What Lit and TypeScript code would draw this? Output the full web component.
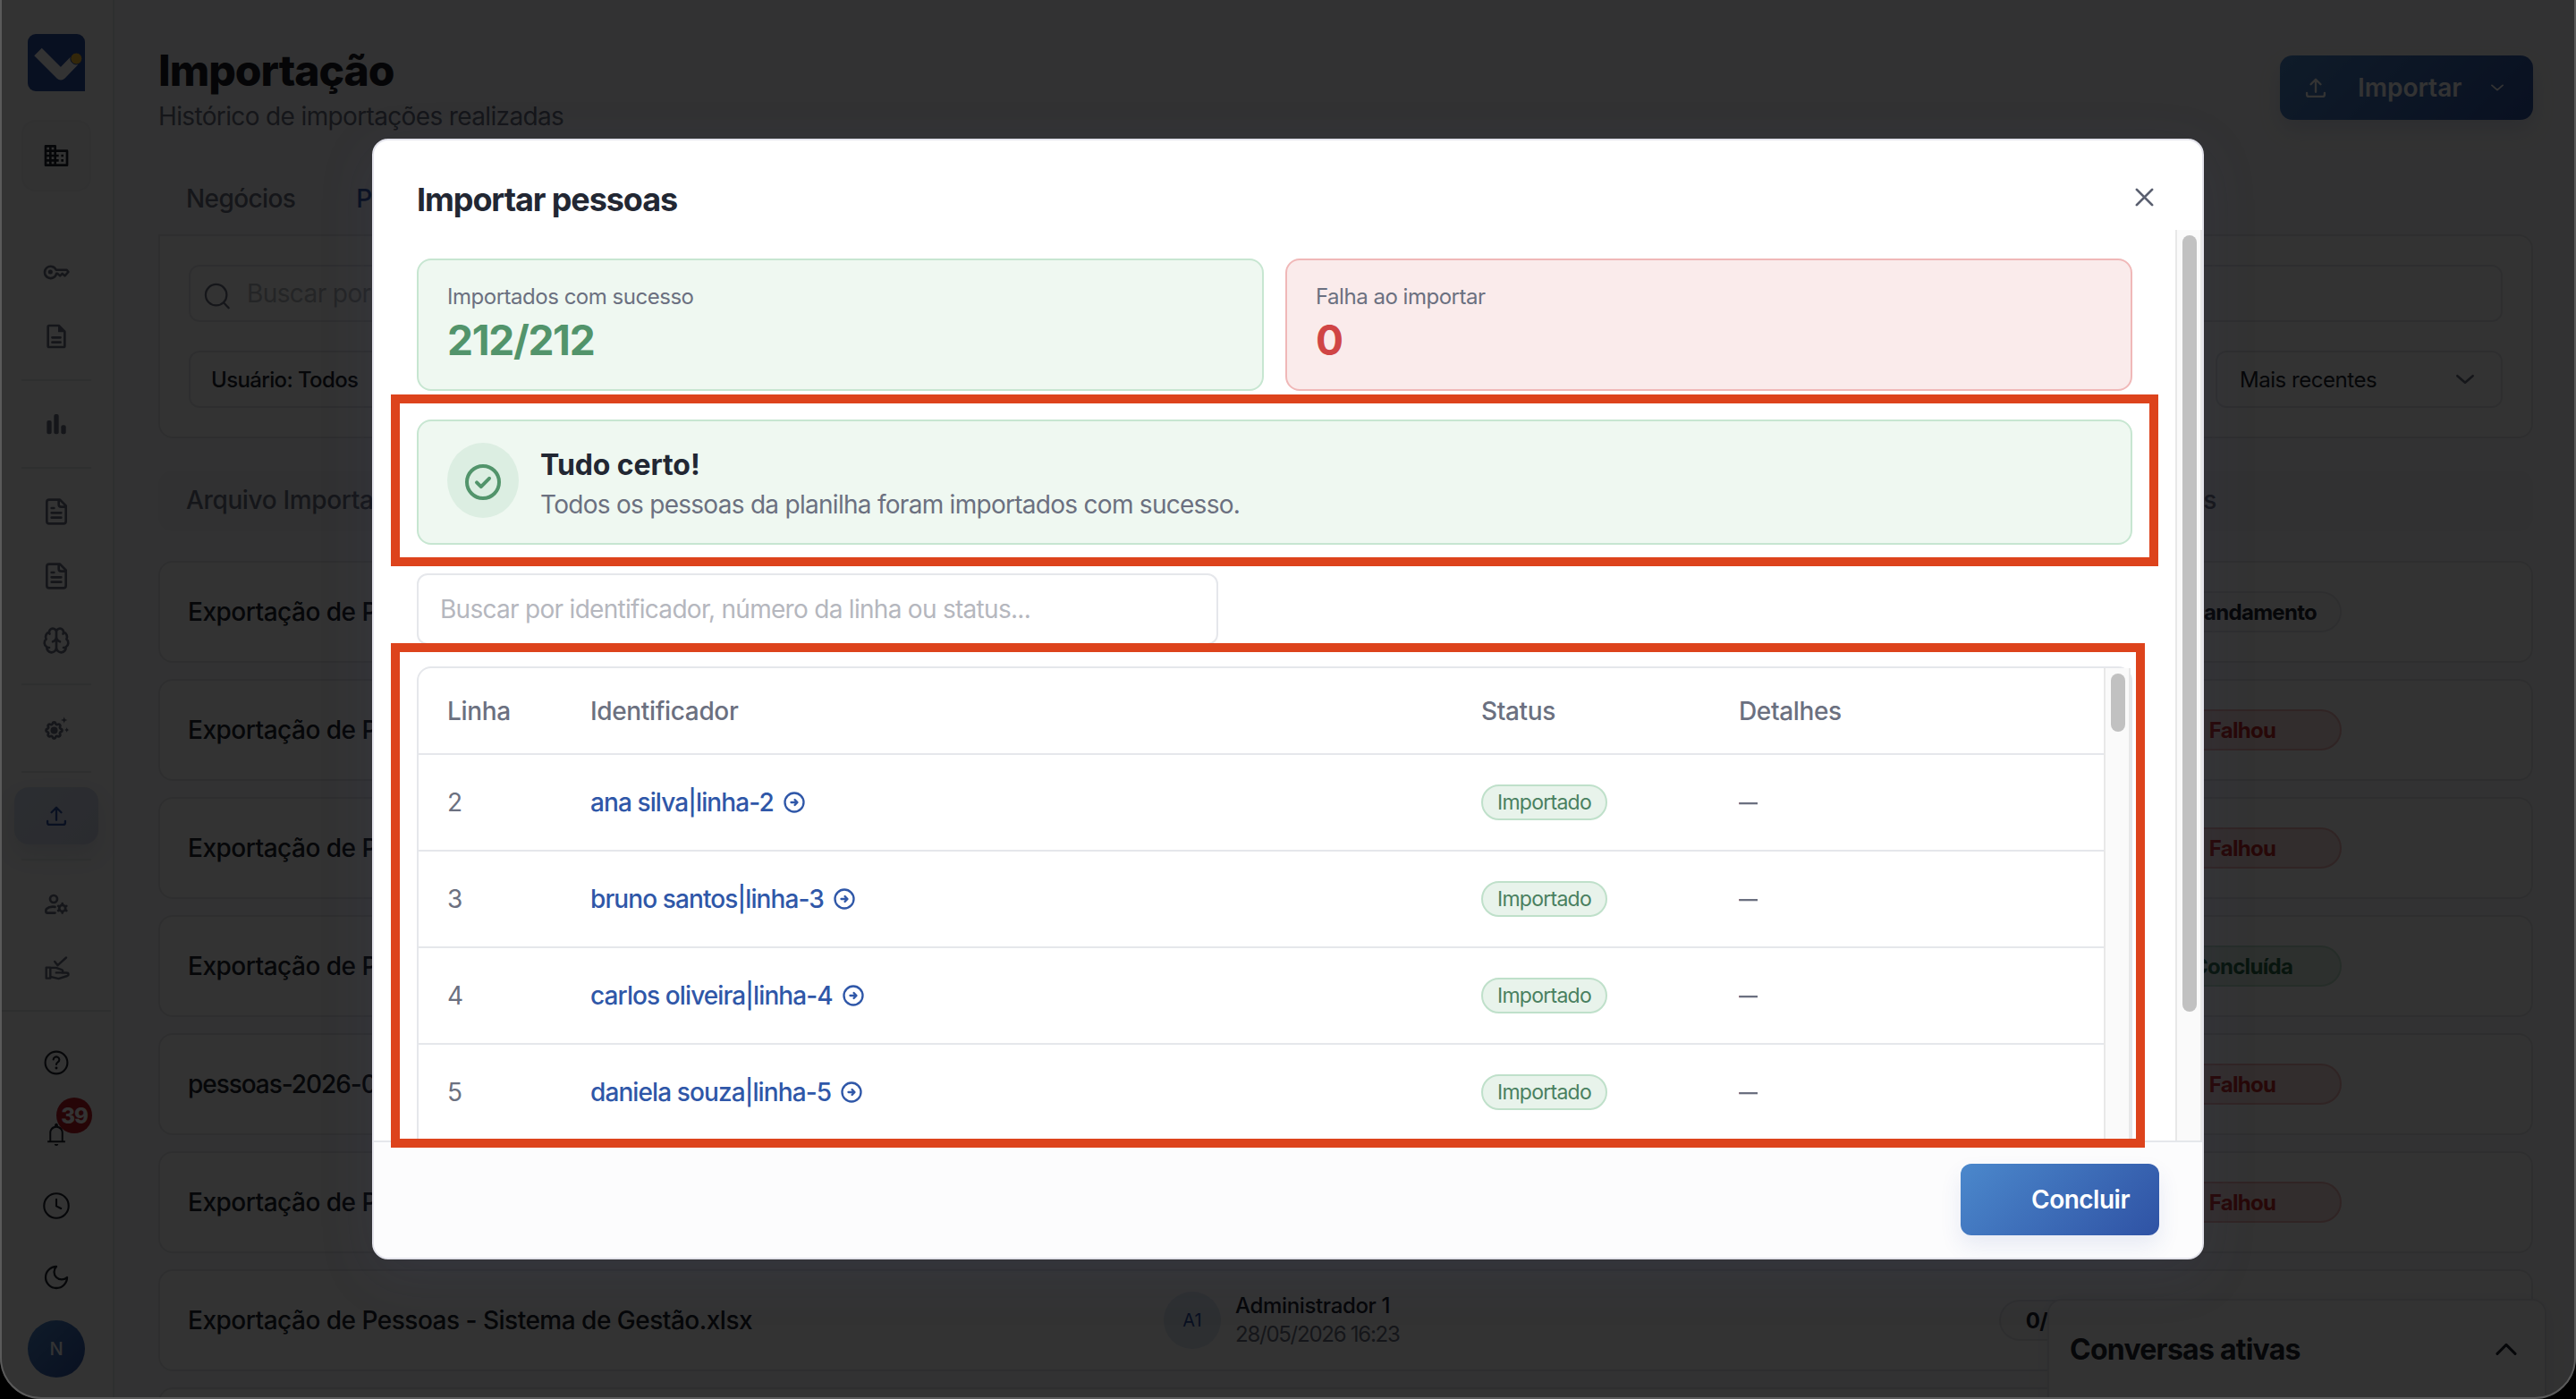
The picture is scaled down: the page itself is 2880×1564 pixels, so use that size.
import { LitElement, html, svg, css, type TemplateResult } from "lit";
import { customElement, property } from "lit/decorators.js";
import { classMap } from "lit/directives/class-map.js";

const GEAR =
  "M10.325 4.317c.426-1.756 2.924-1.756 3.35 0a1.724 1.724 0 0 0 2.573 1.066c1.543-.94 3.31.826 2.37 2.37a1.724 1.724 0 0 0 1.065 2.572c1.756.426 1.756 2.924 0 3.35a1.724 1.724 0 0 0-1.066 2.573c.94 1.543-.826 3.31-2.37 2.37a1.724 1.724 0 0 0-2.572 1.065c-.426 1.756-2.924 1.756-3.35 0a1.724 1.724 0 0 0-2.573-1.066c-1.543.94-3.31-.826-2.37-2.37a1.724 1.724 0 0 0-1.065-2.572c-1.756-.426-1.756-2.924 0-3.35a1.724 1.724 0 0 0 1.066-2.573c-.94-1.543.826-3.31 2.37-2.37c1 .608 2.296.07 2.572-1.065z";

interface Glyph {
  box: number;
  weight: number;
  art: TemplateResult;
}

const GLYPHS: Record<string, Glyph> = {
  building: {
    box: 24,
    weight: 0,
    art: svg`<path fill="currentColor" d="M12 7V4a1 1 0 0 0-1-1H3a1 1 0 0 0-1 1v16a1 1 0 0 0 1 1h18a1 1 0 0 0 1-1V8a1 1 0 0 0-1-1H12zM6 19H4v-2h2v2zm0-4H4v-2h2v2zm0-4H4V9h2v2zm0-4H4V5h2v2zm4 12H8v-2h2v2zm0-4H8v-2h2v2zm0-4H8V9h2v2zm0-4H8V5h2v2zm10 12h-8v-2h2v-2h-2v-2h2v-2h-2V9h8v10zm-2-8h-2v2h2v-2zm0 4h-2v2h2v-2z"/>`,
  },
  key: {
    box: 24,
    weight: 1.9,
    art: svg`<path d="M11.8 10.3h8.900l1.400 1.700-3 3.300-2.100-1.900-1.900 1.900-2.100-1.900h-.9a5 5 0 1 1-.3-3.100z"/><circle cx="7" cy="12" r="1.900" fill="currentColor" stroke="none"/>`,
  },
  doc: {
    box: 24,
    weight: 2,
    art: svg`<path d="M14 3H6a1 1 0 0 0-1 1v16a1 1 0 0 0 1 1h12a1 1 0 0 0 1-1V8zM8.6 17h6.8M8.6 13h6.8"/><path d="M13.5 3v5.5H19z" fill="currentColor" stroke="none"/>`,
  },
  bars: {
    box: 24,
    weight: 0,
    art: svg`<g fill="currentColor"><rect x="4" y="9" width="4" height="11.4" rx="1.500"/><rect x="10" y="3.7" width="4" height="16.7" rx="1.500"/><rect x="16" y="13" width="4" height="7.4" rx="1.500"/></g>`,
  },
  file: {
    box: 24,
    weight: 2,
    art: svg`<path d="M15 2H6a2 2 0 0 0-2 2v16a2 2 0 0 0 2 2h12a2 2 0 0 0 2-2V7zM14 2v4a2 2 0 0 0 2 2h4M10 9H8M16 13H8M16 17H8"/>`,
  },
  brain: {
    box: 24,
    weight: 2,
    art: svg`<path d="M12 5a3 3 0 1 0-5.997.125 4 4 0 0 0-2.526 5.77 4 4 0 0 0 .556 6.588A4 4 0 1 0 12 18zM12 5a3 3 0 1 1 5.997.125 4 4 0 0 1 2.526 5.77 4 4 0 0 1-.556 6.588A4 4 0 1 1 12 18zM15 13a4.5 4.5 0 0 1-3-4 4.5 4.5 0 0 1-3 4M6.003 5.125A3 3 0 0 0 6.4 6.5M17.6 6.5a3 3 0 0 0 .4-1.375M6 18a4 4 0 0 1-1.967-.516M19.967 17.484A4 4 0 0 1 18 18"/>`,
  },
  automation: {
    box: 32,
    weight: 2.8,
    art: svg`<path transform="translate(1.5 6.5)" d=${GEAR}/><circle cx="13.5" cy="18.5" r="4" fill="currentColor" stroke="none"/><path fill="currentColor" stroke="none" d="M24.7 3.2c.5 2.6 1.2 3.3 3.8 3.8-2.6.5-3.3 1.2-3.8 3.8-.5-2.6-1.2-3.3-3.8-3.8 2.6-.5 3.3-1.2 3.8-3.8zM27.7 15c.4 2 1 2.6 3 3-2 .4-2.6 1-3 3-.4-2-1-2.6-3-3 2-.4 2.6-1 3-3z"/>`,
  },
  upload: {
    box: 24,
    weight: 2,
    art: svg`<path d="M3.5 17v1.6A1.9 1.9 0 0 0 5.4 20.500h13.200a1.900 1.900 0 0 0 1.900-1.900V17M7.300 8.800 12 4.100l4.700 4.700M12 4.500V16"/>`,
  },
  userGear: {
    box: 32,
    weight: 2.7,
    art: svg`<circle cx="13" cy="11" r="4"/><path d="M14.500 19.900c-.8-.1-1.600-.2-2.500-.2-3 0-5.500.9-6.900 2.200-.6.600-.7 1.200-.7 2v1.300a1.400 1.400 0 0 0 1.400 1.400h8.700"/><circle cx="22.700" cy="21.400" r="3.500"/><path d="M22.700 17.400v-1.200M22.700 26.600v-1.200M26.200 19.400l1-.6M18.200 24l1-.6M26.200 23.400l1 .6M18.200 18.800l1 .6"/>`,
  },
  handCheck: {
    box: 32,
    weight: 2.4,
    art: svg`<path d="m14.200 9 3.300 4.200L27 4.500M4.700 15.600h4.600v12H4.700zM9.300 15.900h6.400l6.300 2.300c2 .9 1.500 3.200-.6 3.200h-5.600M22 21.500h5.200c3 0 3 2.700 1 3.500l-9.700 3.100-9.200-2.200"/>`,
  },
  help: {
    box: 24,
    weight: 1.6,
    art: svg`<circle cx="12" cy="12" r="9.300"/><path d="M9.500 9.400a2.500 2.400 0 1 1 3.800 2.100c-.9.600-1.300 1-1.300 2"/><circle cx="12" cy="16.500" r="1.100" fill="currentColor" stroke="none"/>`,
  },
  bell: {
    box: 24,
    weight: 0,
    art: svg`<path fill="currentColor" d="M4.600 19v-1.500h1.600V10.800c0-1.400.4-2.600 1.200-3.700.8-1 1.900-1.800 3.200-2.100v-.6c0-.4.1-.7.400-1a1.400 1.400 0 0 1 2 0c.3.300.4.600.4 1V5c1.300.3 2.400 1 3.200 2.100.8 1.100 1.200 2.300 1.200 3.700v6.700h1.600V19zM12 21.800a1.700 1.700 0 0 1-1.700-1.500h3.400a1.700 1.700 0 0 1-1.700 1.500zM7.700 17.500h8.600v-6.700c0-1.200-.4-2.200-1.300-3a4.200 4.200 0 0 0-6 0c-.9.800-1.300 1.800-1.300 3z"/>`,
  },
  clock: {
    box: 24,
    weight: 1.6,
    art: svg`<circle cx="12" cy="12" r="10.300"/><path d="M12 6.600v5.700l3.900 1.900"/>`,
  },
  moon: {
    box: 24,
    weight: 1.7,
    art: svg`<path d="M12 3a6 6 0 0 0 9 9 9 9 0 1 1-9-9z"/>`,
  },
  search: {
    box: 24,
    weight: 1.7,
    art: svg`<circle cx="11" cy="11" r="8.800"/><path d="m17.200 17.400 4.300 4.500"/>`,
  },
  down: { box: 24, weight: 2.4, art: svg`<path d="m4 8.500 8 7 8-7"/>` },
  up: { box: 24, weight: 2.4, art: svg`<path d="m4 15.500 8-8 8 8"/>` },
  close: { box: 24, weight: 2.9, art: svg`<path d="m3 3 18 18M21 3 3 21"/>` },
  check: {
    box: 24,
    weight: 2,
    art: svg`<circle cx="12" cy="12" r="9"/><path d="m8.500 12.200 2.400 2.400 4.600-4.700"/>`,
  },
  open: {
    box: 24,
    weight: 2,
    art: svg`<circle cx="12" cy="12" r="9"/><path d="M9 12h5.800M12.500 9.400l2.500 2.600-2.500 2.600"/>`,
  },
};

@customElement("ui-icon")
class UiIcon extends LitElement {
  @property() name = "";
  static styles = css`
    :host {
      display: block;
      flex: none;
      width: var(--icon-size, 32px);
      height: var(--icon-size, 32px);
    }
    .art {
      display: block;
      width: 100%;
      height: 100%;
      overflow: visible;
      fill: none;
      stroke-linecap: round;
      stroke-linejoin: round;
    }
  `;
  render() {
    const g = GLYPHS[this.name];
    return html`<svg
      class="art"
      viewBox="0 0 ${g.box} ${g.box}"
      stroke=${g.weight ? "currentColor" : "none"}
      stroke-width=${g.weight}
    >
      ${g.art}
    </svg>`;
  }
}

@customElement("side-nav")
class SideNav extends LitElement {
  static styles = css`
    :host {
      display: flex;
      flex-direction: column;
      align-items: center;
      width: 122px;
      padding-right: 2px;
      border-right: 2px solid #e7e8ec;
      background: #fcfcfd;
      color: #6b7080;
    }
    .logo {
      width: 64px;
      height: 64px;
      margin-top: 38px;
      border-radius: 9px 9px 0 9px;
      background: #2c50a4;
    }
    .company {
      display: grid;
      place-items: center;
      box-sizing: border-box;
      width: 78px;
      height: 80px;
      margin: 32px 0 54px;
      border: 2px solid #f2f3f5;
      border-radius: 16px;
      background: #f8f8fa;
      color: #20242e;
    }
    .slot {
      display: grid;
      place-items: center;
      flex: none;
      width: 94px;
      height: 72px;
    }
    .rule {
      flex: none;
      width: 78px;
      height: 2px;
      margin: 12px 0;
      background: #e7e8ec;
    }
    .active {
      display: grid;
      place-items: center;
      width: 94px;
      height: 64px;
      border-radius: 16px;
      background: linear-gradient(135deg, #d8e2f4, #d2d7ea);
      box-shadow: 0 12px 24px rgba(60, 80, 130, 0.12);
      color: #2f52a4;
      --icon-size: 28px;
    }
    .foot {
      display: flex;
      flex-direction: column;
      align-items: center;
      align-self: stretch;
      margin-top: 11px;
      padding-top: 17px;
      border-top: 2px solid #e7e8ec;
      color: #20242e;
    }
    .tall {
      position: relative;
      display: grid;
      place-items: center;
      width: 80px;
      height: 80px;
    }
    .badge {
      position: absolute;
      top: -1px;
      left: 40px;
      display: grid;
      place-items: center;
      width: 40px;
      height: 40px;
      border-radius: 50%;
      background: #be1a26;
      color: #fff;
      font-size: 24px;
      font-weight: 800;
      letter-spacing: -1px;
    }
    .me {
      display: grid;
      place-items: center;
      width: 64px;
      height: 64px;
      border-radius: 50%;
      background: linear-gradient(135deg, #4b88cc, #2f52a4);
      color: #fff;
      font-size: 20px;
      font-weight: 500;
    }
  `;
  private slotFor(name: string) {
    return html`<div class="slot"><ui-icon name=${name}></ui-icon></div>`;
  }
  render() {
    const rule = html`<div class="rule"></div>`;
    return html`
      <svg class="logo" viewBox="0 0 64 64">
        <path
          d="M11.500 20 37 45.500 52 30"
          fill="none"
          stroke="#fff"
          stroke-width="12"
          stroke-linejoin="round"
        />
        <circle cx="54.300" cy="27.500" r="6.500" fill="#ffc433" stroke="#2c50a4" />
      </svg>
      <div class="company"><ui-icon name="building"></ui-icon></div>
      ${this.slotFor("key")}${this.slotFor("doc")}${rule}${this.slotFor("bars")}${rule}
      ${this.slotFor("file")}${this.slotFor("file")}${this.slotFor("brain")}${rule}
      ${this.slotFor("automation")}${rule}
      <div class="slot">
        <div class="active"><ui-icon name="upload"></ui-icon></div>
      </div>
      ${rule}${this.slotFor("userGear")}${this.slotFor("handCheck")}
      <div class="foot">
        <div class="tall"><ui-icon name="help"></ui-icon></div>
        <div class="tall">
          <ui-icon name="bell"></ui-icon><span class="badge">39</span>
        </div>
        <div class="tall"><ui-icon name="clock"></ui-icon></div>
        <div class="tall"><ui-icon name="moon"></ui-icon></div>
        <div class="tall"><span class="me">N</span></div>
      </div>
    `;
  }
}

type Tone = "plain" | "bad" | "good";
const EXPORT = "Exportação de Pessoas - Sistema de Gestão.xlsx";
const HISTORY: { file: string; status: string; tone: Tone; dense?: boolean }[] = [
  { file: EXPORT, status: "Em andamento", tone: "plain" },
  { file: EXPORT, status: "Falhou", tone: "bad" },
  { file: EXPORT, status: "Falhou", tone: "bad" },
  { file: EXPORT, status: "Concluída", tone: "good" },
  { file: "pessoas-2026-05-28.xlsx", status: "Falhou", tone: "bad", dense: true },
  { file: EXPORT, status: "Falhou", tone: "bad" },
  { file: EXPORT, status: "Falhou", tone: "bad" },
];

@customElement("import-history")
class ImportHistory extends LitElement {
  static styles = css`
    :host {
      display: block;
      box-sizing: border-box;
      min-width: 0;
      padding: 51px 48px 0 49px;
      color: #20242e;
      overflow: hidden;
    }
    .head {
      display: flex;
      justify-content: space-between;
      height: 141px;
    }
    .title {
      margin: 0;
      font-size: 48px;
      line-height: 56px;
      font-weight: 800;
      letter-spacing: -1px;
      color: #1a1d26;
    }
    .sub {
      padding-top: 5px;
      font-size: 28px;
      line-height: 36px;
      letter-spacing: -0.64px;
      color: #6b7080;
    }
    .import {
      display: flex;
      align-items: center;
      box-sizing: border-box;
      width: 283px;
      height: 72px;
      margin-top: 11px;
      padding-left: 26px;
      border-radius: 14px;
      background: linear-gradient(135deg, #4b88cc, #2f52a4);
      box-shadow: 0 12px 24px rgba(47, 82, 164, 0.15);
      color: #fff;
      font-size: 28px;
      font-weight: 600;
      --icon-size: 28px;
    }
    .import .text {
      margin: 0 31px 0 33px;
    }
    .import .arrow {
      --icon-size: 18px;
    }
    .tabs {
      display: flex;
      gap: 68px;
      height: 70px;
      padding-left: 31px;
      font-size: 28px;
      line-height: 60px;
      font-weight: 500;
      letter-spacing: -0.6px;
      color: #6b7080;
    }
    .current {
      color: #2f52a4;
    }
    .filters {
      box-sizing: border-box;
      height: 228px;
      padding: 32px 32px 0;
      border: 2px solid #e5e7eb;
      border-radius: 0 16px 16px 16px;
      background: #fff;
    }
    .field {
      display: flex;
      align-items: center;
      box-sizing: border-box;
      height: 64px;
      border: 2px solid #e5e7eb;
      border-radius: 12px;
    }
    .query {
      padding: 6px 0 0 14px;
      gap: 17px;
      font-size: 28px;
      letter-spacing: -0.6px;
      color: #6b7080;
    }
    .hint {
      margin-top: -6px;
      color: #b5b7be;
    }
    .line {
      display: flex;
      justify-content: space-between;
      margin-top: 32px;
    }
    .user {
      width: 320px;
      padding-left: 23px;
      font-size: 24px;
      font-weight: 500;
      letter-spacing: -0.63px;
    }
    .sort {
      justify-content: space-between;
      width: 321px;
      padding: 0 27px 0 25px;
      font-size: 24px;
      letter-spacing: -0.46px;
      --icon-size: 26px;
    }
    .sort ui-icon {
      color: #6b7080;
    }
    .columns {
      display: grid;
      grid-template-columns: 2187px 1fr;
      align-items: center;
      box-sizing: border-box;
      height: 68px;
      margin: 36px 0 33px;
      padding: 0 0 3px 31px;
      border-radius: 16px;
      background: #f4f5f7;
      font-size: 28px;
      font-weight: 500;
      letter-spacing: -0.36px;
      color: #6b7080;
    }
    .row {
      display: grid;
      grid-template-columns: 946px 1024px 1fr;
      align-items: center;
      box-sizing: border-box;
      height: 114px;
      margin-bottom: 18px;
      padding-left: 31px;
      border: 2px solid #e5e7eb;
      border-radius: 16px;
      background: #fff;
    }
    .file {
      font-size: 28px;
      font-weight: 500;
      letter-spacing: -0.5px;
      white-space: nowrap;
    }
    .dense {
      letter-spacing: -1.05px;
    }
    .who {
      display: flex;
      align-items: center;
      gap: 16px;
      margin-left: 145px;
      font-size: 24px;
      line-height: 32px;
    }
    .initials {
      display: grid;
      place-items: center;
      width: 64px;
      height: 64px;
      border-radius: 50%;
      background: #dfe8f5;
      color: #2f52a4;
      font-size: 20px;
    }
    .name {
      font-weight: 500;
      letter-spacing: -0.35px;
    }
    .date {
      letter-spacing: -1.25px;
      color: #6b7080;
    }
    .result {
      display: flex;
      align-items: center;
      gap: 62px;
      margin-left: 55px;
      font-size: 24px;
      font-weight: 700;
      letter-spacing: -0.7px;
    }
    .pill {
      display: grid;
      place-items: center;
      box-sizing: border-box;
      width: 99px;
      height: 46px;
      border: 2px solid #e5e7eb;
      border-radius: 23px;
      background: #fafafb;
    }
    .wide {
      width: 222px;
    }
    .bad {
      border-color: #eeb4b4;
      background: #f7dede;
      color: #c42a2a;
    }
    .good {
      border-color: #bfe0ca;
      background: #e0f0e5;
      color: #2c6b45;
    }
  `;
  render() {
    return html`
      <div class="head">
        <div>
          <h1 class="title">Importação</h1>
          <div class="sub">Histórico de importações realizadas</div>
        </div>
        <div class="import">
          <ui-icon name="upload"></ui-icon><span class="text">Importar</span
          ><ui-icon class="arrow" name="down"></ui-icon>
        </div>
      </div>
      <div class="tabs"><span>Negócios</span><span class="current">Pessoas</span></div>
      <div class="filters">
        <div class="field query">
          <ui-icon name="search"></ui-icon><span class="hint">Buscar por arquivo</span>
        </div>
        <div class="line">
          <div class="field user">Usuário: Todos</div>
          <div class="field sort">Mais recentes<ui-icon name="down"></ui-icon></div>
        </div>
      </div>
      <div class="columns"><span>Arquivo Importado</span><span>Status</span></div>
      ${HISTORY.map(
        (r) => html`<div class="row">
          <span class=${classMap({ file: true, dense: !!r.dense })}>${r.file}</span>
          <div class="who">
            <span class="initials">A1</span>
            <div>
              <div class="name">Administrador 1</div>
              <div class="date">28/05/2026 16:23</div>
            </div>
          </div>
          <div class="result">
            <span class="pill">0/0</span>
            <span class=${classMap({ pill: true, wide: true, [r.tone]: true })}
              >${r.status}</span
            >
          </div>
        </div>`
      )}
      <div class="row"></div>
    `;
  }
}

const ROWS: [number, string][] = [
  [2, "ana silva|linha-2"],
  [3, "bruno santos|linha-3"],
  [4, "carlos oliveira|linha-4"],
  [5, "daniela souza|linha-5"],
];

@customElement("import-dialog")
class ImportDialog extends LitElement {
  static styles = css`
    :host {
      display: flex;
      flex-direction: column;
      box-sizing: border-box;
      width: 2048px;
      height: 1253px;
      border: 2px solid #e4e4ec;
      border-radius: 18px;
      background: #fff;
      box-shadow: 0 16px 64px rgba(70, 80, 140, 0.12);
      overflow: hidden;
      color: #222733;
    }
    .head {
      display: flex;
      flex: none;
      justify-content: space-between;
      box-sizing: border-box;
      height: 100px;
      padding: 44px 53px 0 48px;
    }
    .title {
      font-size: 36px;
      line-height: 44px;
      font-weight: 700;
      letter-spacing: -1.09px;
    }
    .close {
      padding-top: 8px;
      color: #5b6070;
      --icon-size: 23px;
    }
    .body {
      display: flex;
      flex: none;
      height: 1018px;
      overflow: hidden;
    }
    .content {
      display: flex;
      flex-direction: column;
      flex: none;
      box-sizing: border-box;
      width: 2014px;
      padding: 32px 48px 0;
    }
    .track {
      box-sizing: border-box;
      border: solid #e8e8e8;
      border-width: 0 2px;
      background: #fafafa;
    }
    .outer {
      width: 30px;
      padding: 6px 4px 0 6px;
    }
    .thumb {
      width: 16px;
      border-radius: 8px;
      background: #c1c1c1;
    }
    .outer .thumb {
      height: 868px;
    }
    .stats {
      display: grid;
      grid-template-columns: 1fr 1fr;
      gap: 24px;
    }
    .card {
      box-sizing: border-box;
      height: 148px;
      padding: 26px 32px;
      border: 2px solid;
      border-radius: 16px;
    }
    .ok {
      border-color: #c7e6d1;
      background: #eff8f1;
    }
    .ko {
      border-color: #f0b8b8;
      background: #faebeb;
    }
    .label {
      font-size: 24px;
      line-height: 30px;
      letter-spacing: -0.48px;
      color: #6b7080;
    }
    .value {
      margin-top: 3px;
      font-size: 46px;
      line-height: 60px;
      font-weight: 700;
      letter-spacing: -1.3px;
      color: #52946b;
    }
    .ko .value {
      color: #d04545;
    }
    .alert {
      display: flex;
      align-items: center;
      flex: none;
      gap: 24px;
      margin-top: 32px;
    }
    .alert.card {
      height: 140px;
      padding: 0 0 0 32px;
    }
    .bubble {
      display: grid;
      place-items: center;
      box-sizing: border-box;
      width: 80px;
      height: 84px;
      margin-top: -5px;
      padding-top: 4px;
      border-radius: 50%;
      background: #dceee2;
      color: #52946b;
      --icon-size: 48px;
    }
    .message {
      padding-top: 6px;
    }
    .strong {
      font-size: 32px;
      line-height: 44px;
      font-weight: 650;
      letter-spacing: -0.1px;
    }
    .text {
      font-size: 28px;
      line-height: 44px;
      letter-spacing: -0.72px;
      color: #6b7080;
    }
    .search {
      flex: none;
      display: flex;
      align-items: center;
      box-sizing: border-box;
      width: 896px;
      height: 80px;
      margin-top: 32px;
      padding-left: 24px;
      border: 2px solid #e5e7eb;
      border-radius: 12px;
      font-size: 28px;
      letter-spacing: -0.71px;
      color: #b5b7be;
    }
    .table {
      flex: none;
      display: flex;
      box-sizing: border-box;
      height: 700px;
      margin-top: 24px;
      border: 2px solid #e5e7eb;
      border-radius: 16px;
    }
    .grid {
      flex: 1;
      font-size: 28px;
      color: #6b7080;
    }
    .line {
      display: grid;
      grid-template-columns: 160px 996px 288px 1fr;
      align-items: center;
      box-sizing: border-box;
      height: 108px;
      padding-left: 32px;
      border-bottom: 2px solid #e5e7eb;
    }
    .names {
      height: 97px;
      font-weight: 550;
      letter-spacing: -0.35px;
    }
    .link {
      display: flex;
      align-items: center;
      gap: 9px;
      font-weight: 540;
      letter-spacing: -0.9px;
      color: #2f57a8;
      --icon-size: 28px;
    }
    .tag {
      display: grid;
      place-items: center;
      box-sizing: border-box;
      width: 141px;
      height: 40px;
      border: 2px solid #bfe0ca;
      border-radius: 20px;
      background: #e8f3eb;
      font-size: 23px;
      letter-spacing: -0.75px;
      color: #4a8060;
    }
    .dash {
      width: 21px;
      overflow: hidden;
      letter-spacing: -8px;
    }
    .inner {
      width: 30px;
      padding: 6px 4px 0 6px;
    }
    .inner .thumb {
      height: 65px;
    }
    .foot {
      display: flex;
      flex: 1;
      justify-content: flex-end;
      padding: 24px 48px 0;
      border-top: 2px solid #e5e7eb;
      background: #fcfcfd;
    }
    .done {
      box-sizing: border-box;
      width: 222px;
      height: 80px;
      padding-left: 79px;
      border-radius: 12px;
      background: linear-gradient(135deg, #4b88cc, #2f52a4);
      box-shadow: 0 12px 24px rgba(47, 82, 164, 0.1);
      color: #fff;
      font-size: 28px;
      line-height: 80px;
      font-weight: 600;
      letter-spacing: -0.5px;
    }
  `;
  render() {
    return html`
      <div class="head">
        <span class="title">Importar pessoas</span>
        <span class="close"><ui-icon name="close"></ui-icon></span>
      </div>
      <div class="body">
        <div class="content">
          <div class="stats">
            <div class="card ok">
              <div class="label">Importados com sucesso</div>
              <div class="value">212/212</div>
            </div>
            <div class="card ko">
              <div class="label">Falha ao importar</div>
              <div class="value">0</div>
            </div>
          </div>
          <div class="alert card ok">
            <span class="bubble"><ui-icon name="check"></ui-icon></span>
            <div class="message">
              <div class="strong">Tudo certo!</div>
              <div class="text">
                Todos os pessoas da planilha foram importados com sucesso.
              </div>
            </div>
          </div>
          <div class="search">Buscar por identificador, número da linha ou status...</div>
          <div class="table">
            <div class="grid">
              <div class="line names">
                <span>Linha</span><span>Identificador</span><span>Status</span
                ><span>Detalhes</span>
              </div>
              ${ROWS.map(
                ([n, id]) => html`<div class="line">
                  <span>${n}</span>
                  <span class="link">${id}<ui-icon name="open"></ui-icon></span>
                  <span class="tag">Importado</span>
                  <span class="dash">—</span>
                </div>`
              )}
            </div>
            <div class="track inner"><div class="thumb"></div></div>
          </div>
        </div>
        <div class="track outer"><div class="thumb"></div></div>
      </div>
      <div class="foot"><div class="done">Concluir</div></div>
    `;
  }
}

@customElement("app-root")
class AppRoot extends LitElement {
  static styles = css`
    :host {
      display: block;
      position: relative;
      width: 2880px;
      height: 1564px;
      overflow: hidden;
      background: #000;
      font-family: Inter, "Liberation Sans", sans-serif;
    }
    .page {
      display: grid;
      grid-template-columns: 126px minmax(0, 1fr);
      box-sizing: border-box;
      height: 1564px;
      padding-left: 2px;
      border-radius: 0 0 46px 46px;
      background: #fbfbfc;
      overflow: hidden;
    }
    .chats {
      position: absolute;
      left: 2289px;
      top: 1452px;
      display: flex;
      align-items: center;
      justify-content: space-between;
      box-sizing: border-box;
      width: 558px;
      height: 130px;
      padding: 0 28px 17px 23px;
      border: 2px solid #e5e7eb;
      border-radius: 16px;
      background: #fff;
      box-shadow: 0 4px 24px rgba(30, 40, 80, 0.08);
      color: #20242e;
      font-size: 32px;
      font-weight: 700;
      letter-spacing: -0.75px;
      --icon-size: 30px;
    }
    .veil {
      position: absolute;
      inset: 0;
      display: flex;
      justify-content: center;
      align-items: flex-start;
      padding-top: 155px;
      background: rgba(0, 0, 0, 0.8);
    }
    .edge {
      position: absolute;
      inset: -4px 0 0 0;
      border: 2px solid #5a5a5a;
      border-radius: 0 0 46px 46px;
      box-shadow: 0 0 0 40px #000;
    }
    .mark {
      position: absolute;
      box-sizing: border-box;
      border: 10px solid #dd431c;
    }
    .first {
      left: 437px;
      top: 441px;
      width: 1976px;
      height: 192px;
    }
    .second {
      left: 437px;
      top: 719px;
      width: 1961px;
      height: 564px;
    }
  `;
  render() {
    return html`
      <div class="page">
        <side-nav></side-nav>
        <import-history></import-history>
      </div>
      <div class="chats">Conversas ativas<ui-icon name="up"></ui-icon></div>
      <div class="veil"><import-dialog></import-dialog></div>
      <div class="edge"></div>
      <div class="mark first"></div>
      <div class="mark second"></div>
    `;
  }
}
